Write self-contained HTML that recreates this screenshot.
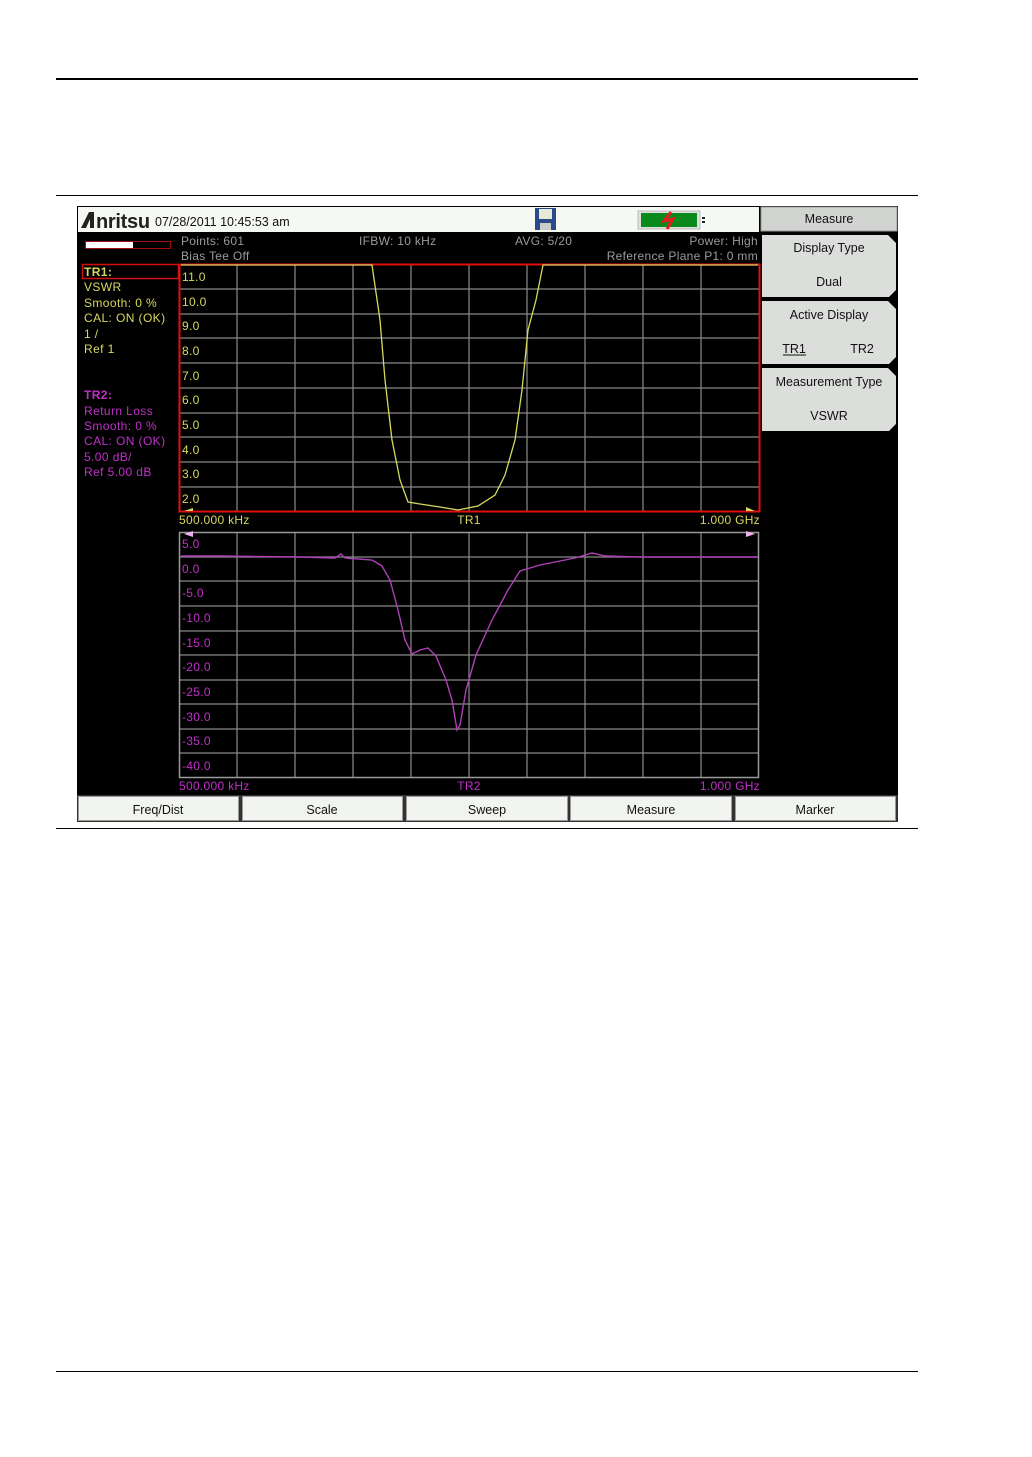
<!DOCTYPE html>
<html><head><meta charset="utf-8"><style>
html,body{margin:0;padding:0;background:#fff;}
svg{display:block;font-family:"Liberation Sans",sans-serif;}
</style></head><body>
<svg width="1032" height="1457" viewBox="0 0 1032 1457">
<rect width="1032" height="1457" fill="#fff"/>
<line x1="56" y1="79" x2="918" y2="79" stroke="#000" stroke-width="2"/>
<line x1="56" y1="195.5" x2="918" y2="195.5" stroke="#000" stroke-width="1"/>
<line x1="56" y1="828.5" x2="918" y2="828.5" stroke="#000" stroke-width="1"/>
<line x1="56" y1="1371.5" x2="918" y2="1371.5" stroke="#000" stroke-width="1"/>

<rect x="77" y="206" width="821" height="616" fill="#000"/>
<rect x="78" y="207" width="681" height="25" fill="#f6f8f4"/>
<path d="M81 228 L89 212 H94 L94 228 H90 V219 L86 228 Z" fill="#222"/>
<text x="96" y="228" font-size="20" font-weight="bold" fill="#222" letter-spacing="-0.3">nritsu</text>
<text x="155" y="226" font-size="12.5" fill="#111">07/28/2011 10:45:53 am</text>
<rect x="535" y="208" width="21" height="22" fill="#2a4a8a"/>
<rect x="539" y="209" width="13" height="10" fill="#e8e8d8"/>
<rect x="540" y="223" width="11" height="7" fill="#ccc"/>
<rect x="638" y="211" width="62" height="18" fill="#e0e0e0" stroke="#bbb"/>
<rect x="641" y="213" width="56" height="14" fill="#0a8a1a"/>
<path d="M671 212 L664 221 L673 219 L667 229" stroke="#e02020" stroke-width="3" fill="none"/>
<rect x="702" y="217" width="3" height="2" fill="#222"/><rect x="702" y="221" width="3" height="2" fill="#222"/>

<rect x="761" y="207" width="136" height="24" fill="#d2d4d2" stroke="#999"/>
<text x="829" y="223" font-size="12.5" text-anchor="middle" fill="#111">Measure</text>
<g fill="#dcdedc">
<path d="M762 235 H888 L896 243 V290 L889 297 H762 Z"/>
<path d="M762 301 H888 L896 309 V357 L889 364 H762 Z"/>
<path d="M762 368 H888 L896 376 V424 L889 431 H762 Z"/>
</g>
<g font-size="12.5" fill="#111" text-anchor="middle">
<text x="829" y="252">Display Type</text>
<text x="829" y="286">Dual</text>
<text x="829" y="319">Active Display</text>
<text x="794" y="353">TR1</text>
<text x="862" y="353">TR2</text>
<text x="829" y="386">Measurement Type</text>
<text x="829" y="420">VSWR</text>
</g>
<line x1="783" y1="355" x2="806" y2="355" stroke="#111"/>

<rect x="85.5" y="241.5" width="85" height="7" fill="none" stroke="#a01010"/>
<rect x="86" y="242" width="47" height="6" fill="#fff"/>
<g font-size="12" fill="#9a9a9a" letter-spacing="0.3">
<text x="181" y="245">Points: 601</text>
<text x="181" y="260">Bias Tee Off</text>
<text x="359" y="245">IFBW: 10 kHz</text>
<text x="515" y="245">AVG: 5/20</text>
<text x="758" y="245" text-anchor="end">Power: High</text>
<text x="758" y="260" text-anchor="end">Reference Plane P1: 0 mm</text>
</g>

<rect x="82.5" y="264.5" width="96" height="14" fill="none" stroke="#d01010" stroke-width="1.5"/>
<g font-size="12" fill="#d8d860" letter-spacing="0.4">
<text x="84" y="276" font-weight="bold">TR1:</text>
<text x="84" y="291">VSWR</text>
<text x="84" y="307">Smooth: 0 %</text>
<text x="84" y="322">CAL: ON (OK)</text>
<text x="84" y="338">1 /</text>
<text x="84" y="353">Ref 1</text>
</g>
<g font-size="12" fill="#c030c8" letter-spacing="0.4">
<text x="84" y="399" font-weight="bold">TR2:</text>
<text x="84" y="415">Return Loss</text>
<text x="84" y="430">Smooth: 0 %</text>
<text x="84" y="445">CAL: ON (OK)</text>
<text x="84" y="461">5.00 dB/</text>
<text x="84" y="476">Ref 5.00 dB</text>
</g>

<g stroke="#8a8a8a" stroke-width="1.2">
<path d="M237 264V512M295 264V512M353 264V512M411 264V512M469 264V512M527 264V512M585 264V512M643 264V512M701 264V512"/>
<path d="M179 289H760M179 314H760M179 338H760M179 363H760M179 388H760M179 413H760M179 437H760M179 462H760M179 487H760"/>
</g>
<rect x="179.5" y="264.5" width="580" height="247" fill="none" stroke="#e01010" stroke-width="2"/>
<path d="M181 265 H372 L380 320 L385 380 L392 440 L400 480 L408 502 L420 504 L440 507 L458 510 L478 506 L495 495 L505 475 L515 440 L522 390 L528 330 L536 300 L543 265 H758" stroke="#d8d860" stroke-width="1.3" fill="none"/>
<g font-size="12" fill="#d8d860" letter-spacing="0.3">
<text x="182" y="281">11.0</text><text x="182" y="306">10.0</text><text x="182" y="330">9.0</text>
<text x="182" y="355">8.0</text><text x="182" y="380">7.0</text><text x="182" y="404">6.0</text>
<text x="182" y="429">5.0</text><text x="182" y="454">4.0</text><text x="182" y="478">3.0</text>
<text x="182" y="503">2.0</text>
<text x="179" y="524">500.000 kHz</text>
<text x="469" y="524" text-anchor="middle">TR1</text>
<text x="760" y="524" text-anchor="end">1.000 GHz</text>
</g>
<path d="M184 511 L193 508 V511Z M746 507 L755 511 H746Z" fill="#d8d860"/>

<g stroke="#8a8a8a" stroke-width="1.2">
<path d="M237 532V778M295 532V778M353 532V778M411 532V778M469 532V778M527 532V778M585 532V778M643 532V778M701 532V778"/>
<path d="M179 557H759M179 581H759M179 606H759M179 631H759M179 655H759M179 680H759M179 704H759M179 729H759M179 753H759"/>
</g>
<rect x="179.5" y="532.5" width="579" height="245" fill="none" stroke="#9a9a9a" stroke-width="1.5"/>
<path d="M181 556 H220 L300 557 L335 558 L341 554 L345 558 L372 560 L382 566 L390 580 L398 610 L405 640 L412 654 L420 650 L428 648 L436 656 L446 680 L452 700 L457 730 L460 725 L466 690 L476 655 L492 620 L508 590 L520 571 L540 565 L575 558 L592 553 L605 556 L640 557 H758" stroke="#b040b8" stroke-width="1.4" fill="none"/>
<path d="M184 534 L193 531 V537Z M746 531 L755 534 L746 537Z" fill="#f0b0f0"/>
<g font-size="12" fill="#c030c8" letter-spacing="0.3">
<text x="182" y="548">5.0</text><text x="182" y="573">0.0</text><text x="182" y="597">-5.0</text>
<text x="182" y="622">-10.0</text><text x="182" y="647">-15.0</text><text x="182" y="671">-20.0</text>
<text x="182" y="696">-25.0</text><text x="182" y="721">-30.0</text><text x="182" y="745">-35.0</text>
<text x="182" y="770">-40.0</text>
<text x="179" y="790">500.000 kHz</text>
<text x="469" y="790" text-anchor="middle">TR2</text>
<text x="760" y="790" text-anchor="end">1.000 GHz</text>
</g>

<rect x="77" y="795" width="821" height="27" fill="#333"/>
<g fill="#f2f4f0" stroke="#999">
<rect x="78.5" y="796.5" width="160" height="24"/>
<rect x="242.5" y="796.5" width="160" height="24"/>
<rect x="406.5" y="796.5" width="161" height="24"/>
<rect x="570.5" y="796.5" width="161" height="24"/>
<rect x="735.5" y="796.5" width="160" height="24"/>
</g>
<g font-size="12.5" fill="#111" text-anchor="middle">
<text x="158" y="814">Freq/Dist</text>
<text x="322" y="814">Scale</text>
<text x="487" y="814">Sweep</text>
<text x="651" y="814">Measure</text>
<text x="815" y="814">Marker</text>
</g>
</svg>
</body></html>
